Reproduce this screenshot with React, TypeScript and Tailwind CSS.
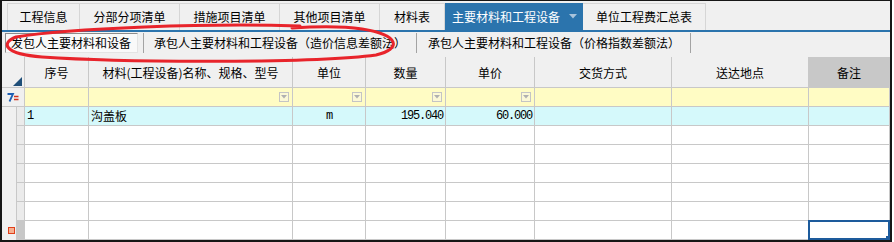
import React from 'react';

const cjk = "font-['Noto_Sans_CJK_SC','Noto_Sans',sans-serif]";
const mono = "font-['Liberation_Mono',monospace]";

const tabs = [
  { label: '工程信息', w: 'w-[73px]' },
  { label: '分部分项清单', w: 'w-[100px]' },
  { label: '措施项目清单', w: 'w-[100px]' },
  { label: '其他项目清单', w: 'w-[100px]' },
  { label: '材料表', w: 'w-[65px]' },
  { label: '主要材料和工程设备', w: 'w-[138px]', active: true },
  { label: '单位工程费汇总表', w: 'w-[123px]' },
];

const cols = [
  { label: '序号', w: 'w-[64px]' },
  { label: '材料(工程设备)名称、规格、型号', w: 'w-[204px]', filter: true },
  { label: '单位', w: 'w-[73px]', filter: true },
  { label: '数量', w: 'w-[80px]', filter: true },
  { label: '单价', w: 'w-[89px]', filter: true },
  { label: '交货方式', w: 'w-[137px]' },
  { label: '送达地点', w: 'w-[137px]' },
  { label: '备注', w: 'w-[81px]', selected: true },
];

function FilterButton() {
  return (
    <div className="w-[10px] h-[10px] border border-[#c4c4c4] bg-[#fbf8d6] flex items-center justify-center">
      <svg width="6" height="4" viewBox="0 0 6 4">
        <polygon points="0,0 6,0 3,3.5" fill="#b0b0b0" />
      </svg>
    </div>
  );
}

function RowIndicator({ last }: { last?: boolean }) {
  return (
    <div className="w-[23px] h-full flex shrink-0">
      <div className="w-[14px] h-full bg-[#f0f0f0] flex items-center justify-end pr-[1px]">
        {last && <div className="w-[7px] h-[7px] border border-[#e0401a] bg-[#f7b192]" />}
      </div>
      <div
        className={
          'w-[9px] h-full border-l border-r border-b border-[#c8c8c8] ' +
          (last ? 'bg-[#c8c8c8]' : 'bg-[#ebebeb]')
        }
      />
    </div>
  );
}

export default function App() {
  const emptyRows = [0, 1, 2, 3, 4, 5];

  return (
    <div className={`w-[894px] h-[242px] bg-white ${cjk}`}>
      <div className="relative w-[892px] h-[242px] border-t border-l-2 border-r-2 border-b-2 border-[#161616] bg-[#f0f0f0] flex flex-col overflow-hidden">
        {/* top tabs */}
        <div className="h-[31px] shrink-0 flex items-end pl-[5px] border-b-2 border-[#2b74ad]">
          {tabs.map((t, i) =>
            t.active ? (
              <div
                key={t.label}
                className={`${t.w} h-[27px] bg-[#2b74ad] text-white text-[12px] leading-none flex items-center pl-[7px] pr-[6px] justify-between`}
              >
                <span>{t.label}</span>
                <svg width="8" height="5" viewBox="0 0 8 5">
                  <polygon points="0,0 8,0 4,4.5" fill="#a9c4dc" />
                </svg>
              </div>
            ) : (
              <div
                key={t.label}
                className={`${t.w} h-[27px] border-t border-r border-[#d6d6d6] ${i === 0 ? 'border-l' : ''} text-[12px] leading-none text-black flex items-center justify-center`}
              >
                {t.label}
              </div>
            )
          )}
        </div>

        {/* sub tabs */}
        <div className="h-[25px] shrink-0 flex items-start pt-[1px] pl-[3px] text-[12px] leading-none text-black">
          <div className="w-[133px] h-[20px] border-t border-l border-[#8c8c8c] border-b border-r border-b-[#e4e4e4] border-r-[#e4e4e4] bg-[#f9f9f9] flex items-center pl-[5px]">
            发包人主要材料和设备
          </div>
          <div className="w-[5px]" />
          <div className="w-px h-[20px] bg-[#a3a3a3]" />
          <div className="w-[272px] h-[20px] flex items-center pl-[10px]">承包人主要材料和工程设备（造价信息差额法）</div>
          <div className="w-px h-[20px] bg-[#a3a3a3]" />
          <div className="w-[273px] h-[20px] flex items-center pl-[11px]">承包人主要材料和工程设备（价格指数差额法）</div>
          <div className="w-px h-[20px] bg-[#a3a3a3]" />
        </div>

        {/* grid */}
        <div className="flex flex-col text-[12px] leading-none text-black">
          {/* header */}
          <div className="h-[31px] flex">
            <div className="w-[23px] h-full border-r border-b border-[#c8c8c8] flex items-end justify-end pr-[2px] pb-[1px]">
              <svg width="9" height="9" viewBox="0 0 9 9">
                <polygon points="9,0 9,9 0,9" fill="#1f4f79" />
              </svg>
            </div>
            {cols.map((c) => (
              <div
                key={c.label}
                className={`${c.w} h-full border-r border-b border-[#c8c8c8] flex items-center justify-center pt-[1px] ${c.selected ? 'bg-[#c8c8c8]' : ''}`}
              >
                {c.label}
              </div>
            ))}
          </div>

          {/* filter row */}
          <div className="h-[19px] flex">
            <div className="w-[23px] h-full border-r border-b border-[#c8c8c8] flex items-center pl-[5px]">
              <svg width="12" height="9" viewBox="0 0 12 9">
                <path d="M0.5 1 H6 L2.5 8.5" stroke="#1d5fb4" strokeWidth="1.8" fill="none" />
                <path d="M7 3.5 H11.5 M7 6.5 H11.5" stroke="#d2321e" strokeWidth="1.6" />
              </svg>
            </div>
            {cols.map((c) => (
              <div
                key={c.label}
                className={`${c.w} h-full border-r border-b border-[#c8c8c8] bg-[#fffcc4] flex items-center justify-end pr-[3px]`}
              >
                {c.filter && <FilterButton />}
              </div>
            ))}
          </div>

          {/* data row */}
          <div className="h-[19px] flex">
            <RowIndicator />
            <div className={`w-[64px] h-full border-r border-b border-[#c8c8c8] bg-[#d5f9fb] flex items-center pl-[2px] ${mono} tracking-[-1.2px]`}>1</div>
            <div className="w-[204px] h-full border-r border-b border-[#c8c8c8] bg-[#d5f9fb] flex items-center pl-[2px]">沟盖板</div>
            <div className={`w-[73px] h-full border-r border-b border-[#c8c8c8] bg-[#d5f9fb] flex items-center justify-center ${mono} tracking-[-1.2px]`}>m</div>
            <div className={`w-[80px] h-full border-r border-b border-[#c8c8c8] bg-[#d5f9fb] flex items-center justify-end pr-[2px] ${mono} tracking-[-1.2px]`}>195.040</div>
            <div className={`w-[89px] h-full border-r border-b border-[#c8c8c8] bg-[#d5f9fb] flex items-center justify-end pr-[2px] ${mono} tracking-[-1.2px]`}>60.000</div>
            <div className="w-[137px] h-full border-r border-b border-[#c8c8c8] bg-[#d5f9fb]" />
            <div className="w-[137px] h-full border-r border-b border-[#c8c8c8] bg-[#d5f9fb]" />
            <div className="w-[81px] h-full border-r border-b border-[#c8c8c8] bg-[#d5f9fb]" />
          </div>

          {/* empty rows */}
          {emptyRows.map((r) => {
            const last = r === emptyRows.length - 1;
            return (
              <div key={r} className="h-[19px] flex">
                <RowIndicator last={last} />
                {cols.map((c) => (
                  <div key={c.label} className={`${c.w} h-full border-r border-b border-[#c8c8c8] bg-white relative`}>
                    {last && c.selected && (
                      <div className="absolute -left-[1px] -top-[1px] -right-[1px] -bottom-[1px] border-2 border-[#1d5b9c]">
                        <div className="absolute -right-[2px] -bottom-[2px] w-[4px] h-[4px] bg-[#1d5b9c]" />
                      </div>
                    )}
                  </div>
                ))}
              </div>
            );
          })}
        </div>

        {/* red hand-drawn annotation */}
        <svg className="absolute left-[-2px] top-[-1px] pointer-events-none" width="894" height="242" viewBox="0 0 894 242">
          <path
            d="M300 26 C210 23 70 28 16 37 C0 43 4 54 42 57 C130 63 320 63 376 55 C402 49 400 35 362 29 C342 26 322 26 292 28"
            stroke="#e8242b"
            strokeWidth="3"
            fill="none"
            strokeLinecap="round"
          />
        </svg>
      </div>
    </div>
  );
}
